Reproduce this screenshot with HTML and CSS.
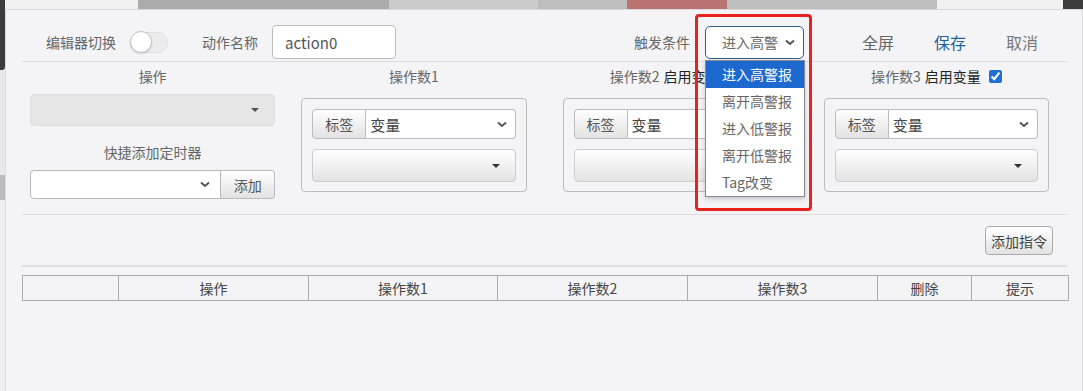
FILE: index.html
```html
<!DOCTYPE html>
<html lang="zh-CN">
<head>
    <meta charset="UTF-8">
    <meta name="viewport" content="width=device-width, initial-scale=1.0">
    <title>动作编辑</title>
    <link rel="stylesheet" href="styles.css">
</head>
<body>

    <!-- Page behind the dialog -->
    <div class="backdrop-top">
        <span class="seg seg-dark"></span>
        <span class="seg seg-light seg-w1"></span>
        <span class="seg seg-g1"></span>
        <span class="seg seg-g2"></span>
        <span class="seg seg-g3"></span>
        <span class="seg seg-red"></span>
        <span class="seg seg-g4"></span>
        <span class="seg seg-light seg-w2"></span>
        <span class="seg seg-dark seg-w3"></span>
    </div>

    <div class="stage">
        <div class="backdrop-left">
            <span class="strip-dark"></span>
            <span class="strip-light"></span>
            <span class="strip-gray"></span>
        </div>

        <!-- Action editor dialog -->
        <div class="modal">

            <!-- Header -->
            <div class="modal-head">
                <span class="head-label first">编辑器切换</span>
                <span class="toggle"><span class="knob"></span></span>
                <span class="head-label name-label">动作名称</span>
                <input class="name-input" type="text" value="action0">

                <div class="head-right">
                    <span class="head-label">触发条件</span>
                    <div class="trigger">
                        <div class="trigger-select">
                            <span>进入高警</span>
                            <svg class="chev" width="10" height="7" viewBox="0 0 10 7"><path d="M1 1.5 L5 5 L9 1.5" fill="none" stroke="#555" stroke-width="2"/></svg>
                        </div>
                        <ul class="trigger-list">
                            <li class="active">进入高警报</li>
                            <li>离开高警报</li>
                            <li>进入低警报</li>
                            <li>离开低警报</li>
                            <li>Tag改变</li>
                        </ul>
                        <div class="mark"></div>
                    </div>
                    <a class="head-link link-full">全屏</a>
                    <a class="head-link link-save">保存</a>
                    <a class="head-link link-cancel">取消</a>
                </div>
            </div>

            <!-- Operation and operands -->
            <div class="operands">
                <div class="col col-op">
                    <div class="col-label">操作</div>
                    <div class="picker picker-disabled">
                        <svg class="caret" width="8" height="4" viewBox="0 0 8 4"><path d="M0 0 L8 0 L4 4 Z" fill="#555"/></svg>
                    </div>
                    <div class="col-label timer-label">快捷添加定时器</div>
                    <div class="timer-group">
                        <div class="timer-select">
                            <svg class="chev" width="10" height="7" viewBox="0 0 10 7"><path d="M1 1.5 L5 5 L9 1.5" fill="none" stroke="#555" stroke-width="2"/></svg>
                        </div>
                        <button class="btn timer-btn">添加</button>
                    </div>
                </div>

                <div class="col">
                    <div class="col-label">操作数1</div>
                    <div class="operand-box">
                        <div class="tag-group">
                            <button class="btn tag-btn">标签</button>
                            <div class="tag-select">
                                <span>变量</span>
                                <svg class="chev" width="10" height="7" viewBox="0 0 10 7"><path d="M1 1.5 L5 5 L9 1.5" fill="none" stroke="#555" stroke-width="2"/></svg>
                            </div>
                        </div>
                        <div class="picker">
                            <svg class="caret" width="8" height="4" viewBox="0 0 8 4"><path d="M0 0 L8 0 L4 4 Z" fill="#333"/></svg>
                        </div>
                    </div>
                </div>

                <div class="col">
                    <div class="col-label">操作数2 <span class="use-var">启用变量</span> <input class="use-check" type="checkbox" checked></div>
                    <div class="operand-box">
                        <div class="tag-group">
                            <button class="btn tag-btn">标签</button>
                            <div class="tag-select">
                                <span>变量</span>
                                <svg class="chev" width="10" height="7" viewBox="0 0 10 7"><path d="M1 1.5 L5 5 L9 1.5" fill="none" stroke="#555" stroke-width="2"/></svg>
                            </div>
                        </div>
                        <div class="picker">
                            <svg class="caret" width="8" height="4" viewBox="0 0 8 4"><path d="M0 0 L8 0 L4 4 Z" fill="#333"/></svg>
                        </div>
                    </div>
                </div>

                <div class="col">
                    <div class="col-label">操作数3 <span class="use-var">启用变量</span> <input class="use-check" type="checkbox" checked></div>
                    <div class="operand-box">
                        <div class="tag-group">
                            <button class="btn tag-btn">标签</button>
                            <div class="tag-select">
                                <span>变量</span>
                                <svg class="chev" width="10" height="7" viewBox="0 0 10 7"><path d="M1 1.5 L5 5 L9 1.5" fill="none" stroke="#555" stroke-width="2"/></svg>
                            </div>
                        </div>
                        <div class="picker">
                            <svg class="caret" width="8" height="4" viewBox="0 0 8 4"><path d="M0 0 L8 0 L4 4 Z" fill="#333"/></svg>
                        </div>
                    </div>
                </div>
            </div>

            <!-- Toolbar -->
            <div class="toolbar">
                <button class="btn add-btn">添加指令</button>
            </div>

            <!-- Command list -->
            <table class="cmd-table">
                <colgroup>
                    <col style="width: 96px">
                    <col style="width: 190px">
                    <col style="width: 189px">
                    <col style="width: 190px">
                    <col style="width: 190px">
                    <col style="width: 94px">
                    <col style="width: 97px">
                </colgroup>
                <thead>
                    <tr>
                        <th></th>
                        <th>操作</th>
                        <th>操作数1</th>
                        <th>操作数2</th>
                        <th>操作数3</th>
                        <th>删除</th>
                        <th>提示</th>
                    </tr>
                </thead>
            </table>
        </div>
    </div>

</body>
</html>
```

FILE: styles.css
```css
/* General page styles */
* {
    box-sizing: border-box;
}

html, body {
    margin: 0;
    padding: 0;
    height: 100%;
    overflow: hidden;
}

body {
    display: flex;
    flex-direction: column;
    background-color: #f1f1f1;
    font-family: "Noto Sans CJK SC", "Noto Sans", sans-serif;
    font-size: 14px;
    color: #555;
}

/* Page behind the dialog */
.backdrop-top {
    display: flex;
    height: 9px;
    flex: none;
}

.seg { height: 100%; flex: none; }
.seg-dark { width: 5px; background-color: #3c3c3c; }
.seg-light { background-color: #f1f1f1; }
.seg-w1 { width: 133px; }
.seg-g1 { width: 251px; background-color: #ababab; }
.seg-g2 { width: 149px; background-color: #cbcbcb; }
.seg-g3 { width: 89px; background-color: #bdbdbd; }
.seg-red { width: 100px; background-color: #b97371; }
.seg-g4 { width: 210px; background-color: #bdbdbd; }
.seg-w2 { width: 126px; }
.seg-w3 { width: 20px; }

.stage {
    flex: 1;
    display: flex;
    min-height: 0;
}

.backdrop-left {
    flex: none;
    width: 5px;
    display: flex;
    flex-direction: column;
    background-color: #efefef;
}

.strip-dark {
    height: 61px;
    background-color: #3c3c3c;
    border-bottom-right-radius: 3px;
}

.strip-light {
    height: 105px;
    background-color: #e9e9e9;
}

.strip-gray {
    height: 25px;
    background-color: #bcbcbc;
}

/* Dialog */
.modal {
    flex: 1;
    min-width: 0;
    background-color: #f4f4f6;
    border: 1px solid #dadada;
    border-bottom: none;
    padding: 0 15px 0 16px;
}

/* Header */
.modal-head {
    display: flex;
    align-items: center;
    padding: 15px 0 2px;
    border-bottom: 1px solid #dcdcdc;
}

.head-label {
    color: #666;
    font-size: 14px;
    line-height: 20px;
}

.head-label.first {
    margin-left: 24px;
}

.toggle {
    display: flex;
    align-items: center;
    width: 38px;
    height: 21px;
    margin-left: 14px;
    background-color: #ececec;
    border: 1px solid #e0e0e0;
    border-radius: 11px;
}

.knob {
    width: 22px;
    height: 22px;
    margin-left: -1px;
    background-color: #fff;
    border: 1px solid #c4c4c4;
    border-radius: 50%;
    box-shadow: 0 1px 2px rgba(0, 0, 0, 0.15);
}

.name-label {
    margin-left: 34px;
}

.name-input {
    width: 124px;
    height: 34px;
    margin-left: 14px;
    padding: 0 12px;
    border: 1px solid #bdbdbd;
    border-radius: 4px;
    background-color: #fff;
    font-family: inherit;
    font-size: 15px;
    color: #555;
}

.head-right {
    display: flex;
    align-items: center;
    margin-left: auto;
    margin-right: 29px;
}

.trigger {
    position: relative;
    margin-left: 15px;
}

.trigger-select {
    display: flex;
    align-items: center;
    justify-content: space-between;
    width: 99px;
    height: 33px;
    padding: 0 8px 0 16px;
    background-color: #fff;
    border: 1px solid #2d5e85;
    border-radius: 5px;
    color: #666;
}

/* Open option list of the trigger select */
.trigger-list {
    position: absolute;
    top: 34px;
    left: 0;
    width: 100px;
    margin: 0;
    padding: 0;
    list-style: none;
    background-color: #fff;
    border: 1px solid #8a8a8a;
    box-shadow: 0 2px 5px rgba(0, 0, 0, 0.2);
    z-index: 2;
}

.trigger-list li {
    height: 27px;
    line-height: 27px;
    padding-left: 16px;
    color: #666;
}

.trigger-list li.active {
    background-color: #1c68cf;
    color: #fff;
}

/* Red annotation frame */
.mark {
    position: absolute;
    top: -12px;
    left: -10px;
    width: 117px;
    height: 197px;
    border: 3px solid #e8231f;
    border-radius: 4px;
    z-index: 3;
}

.head-link {
    font-size: 16px;
    line-height: 22px;
    cursor: pointer;
}

.link-full {
    margin-left: 58px;
    color: #666;
}

.link-save {
    margin-left: 40px;
    color: #22629a;
}

.link-cancel {
    margin-left: 40px;
    color: #777;
}

/* Operation and operands */
.operands {
    display: grid;
    grid-template-columns: repeat(4, 1fr);
    align-items: start;
    padding: 4px 0 15px;
    border-bottom: 1px solid #dcdcdc;
}

.col {
    padding: 0 18px;
}

.col-op {
    padding: 0 8px;
}

.col-label {
    display: flex;
    justify-content: center;
    align-items: center;
    height: 20px;
    line-height: 20px;
    color: #666;
}

.use-var {
    margin-left: 4px;
    color: #222;
}

.use-check {
    width: 13px;
    height: 13px;
    margin: 0 0 0 8px;
    accent-color: #1f6fd6;
}

.timer-label {
    margin-top: 16px;
}

.btn {
    font-family: inherit;
    font-size: 14px;
    color: #555;
    background: linear-gradient(#ffffff, #e2e2e2);
    border: 1px solid #bbb;
    border-radius: 4px;
    padding: 0;
    cursor: pointer;
}

.picker {
    display: flex;
    align-items: center;
    justify-content: flex-end;
    height: 33px;
    padding-right: 15px;
    background: linear-gradient(#ffffff, #e3e3e3);
    border: 1px solid #cccccc;
    border-radius: 4px;
}

.picker-disabled {
    height: 32px;
    margin-top: 8px;
    background: #e6e6e6;
    border-color: #dedede;
}

.timer-group {
    display: flex;
    height: 29px;
    margin-top: 8px;
}

.timer-select {
    flex: 1;
    display: flex;
    align-items: center;
    justify-content: flex-end;
    padding-right: 10px;
    background-color: #fff;
    border: 1px solid #b8b8b8;
    border-radius: 4px 0 0 4px;
}

.timer-btn {
    width: 54px;
    border-left: none;
    border-radius: 0 4px 4px 0;
}

.operand-box {
    margin-top: 12px;
    padding: 10px 10px 9px;
    border: 1px solid #bcbcbc;
    border-radius: 4px;
}

.tag-group {
    display: flex;
    height: 30px;
    margin-bottom: 10px;
}

.tag-btn {
    width: 54px;
    border-radius: 4px 0 0 4px;
}

.tag-select {
    flex: 1;
    display: flex;
    align-items: center;
    justify-content: space-between;
    padding: 0 8px 0 4px;
    background-color: #fff;
    border: 1px solid #bbb;
    border-left: none;
    border-radius: 0 4px 4px 0;
    color: #444;
    font-size: 15px;
}

/* Toolbar */
.toolbar {
    display: flex;
    justify-content: flex-end;
    padding: 11px 14px 10px 0;
    border-bottom: 2px solid #dedede;
}

.add-btn {
    width: 68px;
    height: 29px;
    color: #444;
    border-color: #aaa;
}

/* Command list */
.cmd-table {
    width: 1046px;
    margin-top: 8px;
    border-collapse: collapse;
    table-layout: fixed;
}

.cmd-table th {
    height: 25px;
    padding: 0;
    border: 1px solid #ababab;
    font-weight: normal;
    font-size: 14px;
    color: #444;
    text-align: center;
}
```
